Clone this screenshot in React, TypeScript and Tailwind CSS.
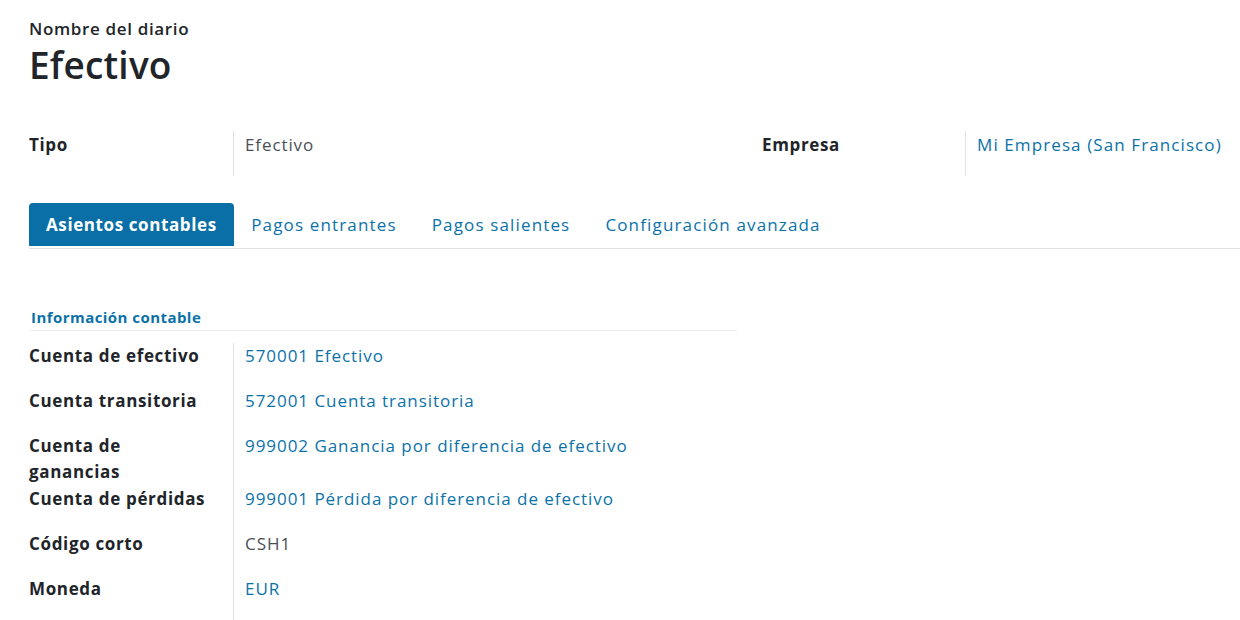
import React from "react";

const FONT = { fontFamily: '"Open Sans", "Noto Sans", sans-serif' };

const rows: { label: string; value: string; link: boolean; twoLine?: boolean }[] = [
  { label: "Cuenta de efectivo", value: "570001 Efectivo", link: true },
  { label: "Cuenta transitoria", value: "572001 Cuenta transitoria", link: true },
  { label: "Cuenta de ganancias", value: "999002 Ganancia por diferencia de efectivo", link: true, twoLine: true },
  { label: "Cuenta de pérdidas", value: "999001 Pérdida por diferencia de efectivo", link: true },
  { label: "Código corto", value: "CSH1", link: false },
  { label: "Moneda", value: "EUR", link: true },
];

export default function App() {
  return (
    <div className="w-[1240px] h-[620px] overflow-hidden bg-white text-[#212529]" style={FONT}>
      <div className="pl-[29px] pt-[17px] flex flex-col items-start">
        <div className="text-[17px] font-semibold leading-[23px] tracking-[0.65px]">Nombre del diario</div>
        <div className="text-[37px] font-semibold leading-[50px] tracking-[0.2px]">Efectivo</div>
      </div>

      <div className="pl-[29px] mt-[41px] grid grid-cols-[733px_1fr]">
        <div className="flex">
          <div className="w-[204px] shrink-0 text-[17px] font-bold leading-[26px] pt-[1px] tracking-[0.65px]">Tipo</div>
          <div className="border-l border-[#dee2e6] h-[45px] pl-[11px] pt-[1px] text-[17px] leading-[26px] text-[#4a4f55] tracking-[0.9px]">
            Efectivo
          </div>
        </div>
        <div className="flex">
          <div className="w-[203px] shrink-0 text-[17px] font-bold leading-[26px] pt-[1px] tracking-[0.65px]">Empresa</div>
          <div className="border-l border-[#dee2e6] h-[45px] pl-[11px] pt-[1px] text-[17px] leading-[26px] text-[#0b72a9] whitespace-nowrap tracking-[1.1px]">
            Mi Empresa (San Francisco)
          </div>
        </div>
      </div>

      <div className="mt-[27px] ml-[29px] flex items-end border-b border-[#dee2e6] h-[46px]">
        <div className="bg-[#0a6fa6] text-white font-bold text-[17px] tracking-[0.6px] rounded-t-[4px] h-[43px] px-[17px] flex items-center mb-[2px]">
          Asientos contables
        </div>
        {["Pagos entrantes", "Pagos salientes", "Configuración avanzada"].map((t) => (
          <div key={t} className="text-[#0b72a9] text-[17px] tracking-[1.15px] h-[43px] px-[17.5px] flex items-center mb-[2px]">
            {t}
          </div>
        ))}
      </div>

      <div className="ml-[29px] w-[708px] mt-[58px]">
        <div className="text-[#0b72a9] font-bold text-[15px] tracking-[0.45px] leading-[20px] pl-[2px] pb-[3px] border-b border-[#eef0f2]">
          Información contable
        </div>
        <div className="mt-[12px]">
          {rows.map((r) => (
            <div key={r.label} className={`flex ${r.twoLine ? "min-h-[53px]" : "min-h-[45px]"}`}>
              <div className={`w-[204px] shrink-0 text-[17px] font-bold leading-[26px] tracking-[0.65px] ${r.twoLine ? "pr-[60px]" : ""}`}>
                {r.label}
              </div>
              <div
                className={`border-l border-[#dee2e6] pl-[11px] text-[17px] leading-[26px] tracking-[0.95px] flex-1 ${
                  r.link ? "text-[#0b72a9]" : "text-[#4a4f55]"
                }`}
              >
                {r.value}
              </div>
            </div>
          ))}
        </div>
      </div>
    </div>
  );
}
